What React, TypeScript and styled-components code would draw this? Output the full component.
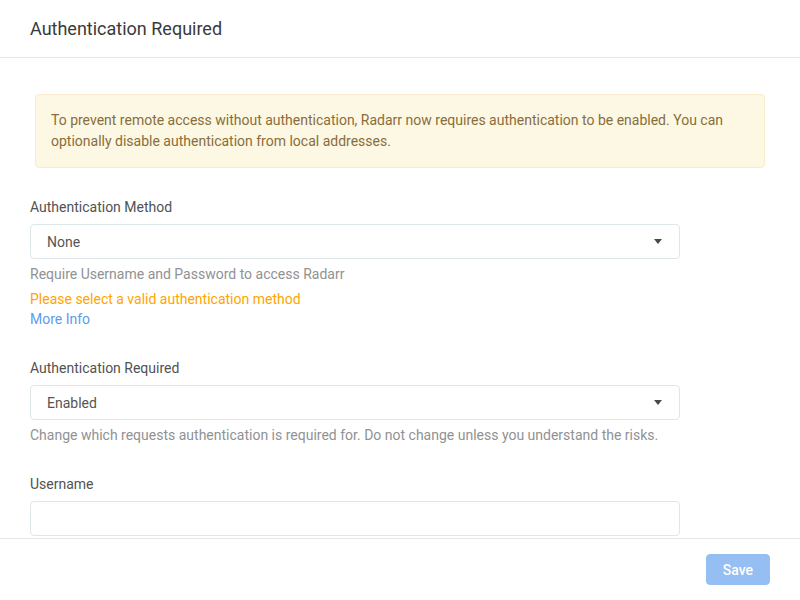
import React from 'react';
import styled, { createGlobalStyle } from 'styled-components';

const GlobalStyle = createGlobalStyle`
  html, body {
    margin: 0;
    padding: 0;
    background: #fff;
  }
  body {
    font-family: Roboto, "Open Sans", "Liberation Sans", sans-serif;
    font-size: 14px;
    color: #515253;
  }
`;

type Option = {
  label: string;
  value: string;
  help: string;
  warning?: string;
  link?: string;
};

const selects: Option[] = [
  {
    label: 'Authentication Method',
    value: 'None',
    help: 'Require Username and Password to access Radarr',
    warning: 'Please select a valid authentication method',
    link: 'More Info',
  },
  {
    label: 'Authentication Required',
    value: 'Enabled',
    help: 'Change which requests authentication is required for. Do not change unless you understand the risks.',
  },
];

function App() {
  return (
    <Modal>
      <GlobalStyle />
      <Header>Authentication Required</Header>
      <Body>
        <Alert>
          To prevent remote access without authentication, Radarr now requires authentication to be enabled. You can
          optionally disable authentication from local addresses.
        </Alert>

        {selects.map((s) => (
          <FormGroup key={s.label}>
            <Label>{s.label}</Label>
            <Select>
              <span>{s.value}</span>
              <svg width="8" height="5" viewBox="0 0 8 5">
                <path d="M0 0 L8 0 L4 5 Z" fill="#4a4a4a" />
              </svg>
            </Select>
            <HelpText>{s.help}</HelpText>
            {s.warning && <WarningText>{s.warning}</WarningText>}
            {s.link && <InfoLink href="#">{s.link}</InfoLink>}
          </FormGroup>
        ))}

        <FormGroup>
          <Label>Username</Label>
          <TextInput type="text" />
        </FormGroup>
      </Body>
      <Footer>
        <SaveButton disabled>Save</SaveButton>
      </Footer>
    </Modal>
  );
}

const Modal = styled.div`
  display: flex;
  flex-direction: column;
  width: 800px;
  height: 600px;
  overflow: hidden;
`;

const Header = styled.div`
  flex: none;
  padding: 15px 30px;
  font-size: 18px;
  line-height: 27px;
  color: #3a3a3a;
  border-bottom: 1px solid #e5e5e5;
`;

const Body = styled.div`
  flex: 1;
  min-height: 0;
  overflow: hidden;
  padding: 36px 30px 0;
`;

const Alert = styled.div`
  margin: 0 5px 29px;
  padding: 15px;
  border: 1px solid #faebcc;
  border-radius: 4px;
  background-color: #fcf8e3;
  color: #8a6d3b;
  line-height: 21px;
`;

const FormGroup = styled.div`
  display: flex;
  flex-direction: column;
  align-items: flex-start;
  margin-bottom: 29px;
`;

const Label = styled.label`
  line-height: 20px;
  margin-bottom: 7px;
  color: #515253;
`;

const Select = styled.div`
  box-sizing: border-box;
  display: flex;
  align-items: center;
  justify-content: space-between;
  width: 650px;
  height: 35px;
  padding: 0 17px 0 16px;
  border: 1px solid #dde6e9;
  border-radius: 4px;
  color: #555;
  background: #fff;
`;

const HelpText = styled.div`
  margin-top: 5px;
  line-height: 20px;
  color: #909293;
`;

const WarningText = styled.div`
  margin-top: 5px;
  line-height: 20px;
  color: #ffa500;
`;

const InfoLink = styled.a`
  line-height: 20px;
  color: #5d9cec;
  text-decoration: none;
`;

const TextInput = styled.input`
  box-sizing: border-box;
  width: 650px;
  height: 35px;
  padding: 6px 16px;
  border: 1px solid #dde6e9;
  border-radius: 4px;
  font: inherit;
  outline: none;
`;

const Footer = styled.div`
  flex: none;
  display: flex;
  justify-content: flex-end;
  padding: 15px 30px;
  border-top: 1px solid #e5e5e5;
`;

const SaveButton = styled.button`
  height: 31px;
  padding: 0 16px;
  border: 1px solid #5d9cec;
  border-radius: 4px;
  background-color: #5d9cec;
  color: #fff;
  font-family: inherit;
  font-size: 14px;
  font-weight: 500;
  opacity: 0.65;
`;

export default App;
